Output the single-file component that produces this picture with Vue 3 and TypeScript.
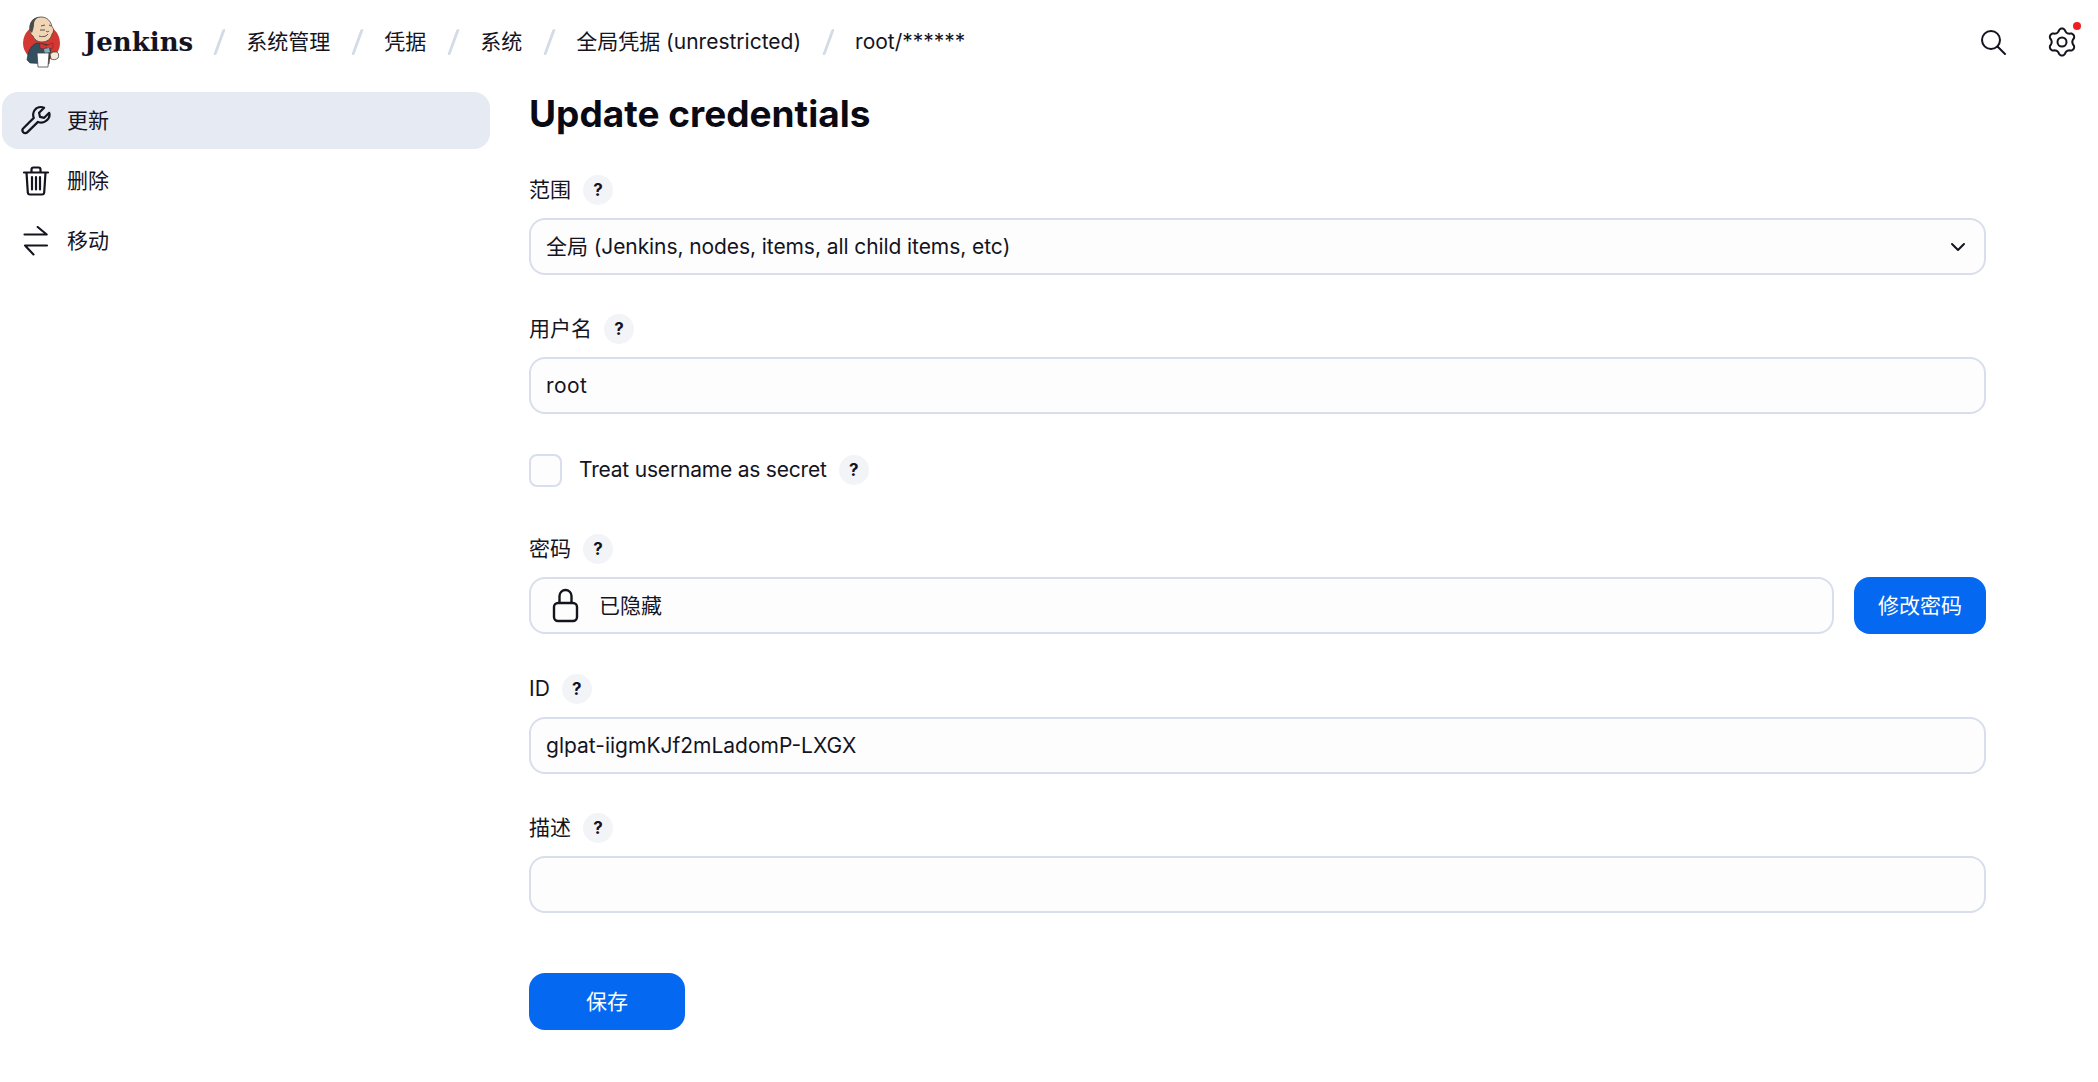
<script setup lang="ts">
const crumbs: string[] = ['系统管理', '凭据', '系统', '全局凭据 (unrestricted)', 'root/******']

function flowerPath(cx: number, cy: number): string {
  const pts: string[] = []
  for (let i = 0; i < 120; i++) {
    const a = (i / 120) * Math.PI * 2
    const c = Math.cos(6 * a)
    const shaped = Math.sign(c) * Math.pow(Math.abs(c), 0.7)
    const r = 11.9 + 1.6 * shaped
    const x = cx + r * Math.sin(a)
    const y = cy - r * Math.cos(a)
    pts.push(`${i === 0 ? 'M' : 'L'}${x.toFixed(2)} ${y.toFixed(2)}`)
  }
  return pts.join('') + 'Z'
}
const gearPath = flowerPath(15, 15)
</script>

<template>
  <div class="page">
    <header class="top">
      <svg class="logo" viewBox="0 0 40 52" width="40" height="52">
        <circle cx="19.500" cy="27" r="18.500" fill="#d33833" />
        <path d="M5 44c1-9 4-15 10-17l12 2c2 3 2 6 1 9l-1 10-19-1z" fill="#335061" stroke="#1d2f3a" stroke-width=".6" />
        <path d="M8 12C8 5 13 1 19 1s10 4 11 10c2 1 2 5 0 7-1 5-5 8-10 8-5 0-8-3-9-6-2-1-4-5-3-8z" fill="#f0d6b7" stroke="#49403a" stroke-width=".8" />
        <path d="M8 15C6 8 10 1 18 1c-4 1-6 4-6 7 0 3-1 6-2 9z" fill="#4a4a46" />
        <path d="M17 20c3 1 7 1 9-2M19 10l4-1M27 9l2 1M18 14l5 0M24 15c1 1 2 1 3 0" fill="none" stroke="#49403a" stroke-width=".9" />
        <path d="M18 27l6 2.500 7-2.500 0 5-5 1-2-1.500-2 1.500-4-1z" fill="#d33833" stroke="#7e1e1a" stroke-width=".5" />
        <path d="M22 33l5-1 1 4-5 2z" fill="#81b0c4" />
        <path d="M15 37h12l-1 14h-10z" fill="#fff" stroke="#49403a" stroke-width=".8" />
        <path d="M28 38l3-2h4c2 1 2 5 1 6-2 2-5 2-7 1z" fill="#f5ead9" stroke="#49403a" stroke-width=".8" />
      </svg>
      <span class="brand">Jenkins</span>
      <nav class="crumbs">
        <template v-for="c in crumbs" :key="c">
          <span class="sep"></span>
          <span class="crumb">{{ c }}</span>
        </template>
      </nav>
      <div class="actions">
        <svg viewBox="0 0 26 26" width="26" height="26" fill="none" stroke="#14141f" stroke-width="2" stroke-linecap="round">
          <circle cx="11" cy="11" r="9" />
          <path d="M17.500 17.500L25 25" />
        </svg>
        <span class="gear">
          <svg viewBox="0 0 30 30" width="30" height="30" fill="none" stroke="#14141f" stroke-width="2" stroke-linejoin="round">
            <path :d="gearPath" />
            <circle cx="15" cy="15" r="4.500" />
          </svg>
          <i class="dot"></i>
        </span>
      </div>
    </header>

    <div class="body">
      <aside class="side">
        <a class="item active">
          <svg viewBox="0 0 30 30" width="30" height="30" fill="none" stroke="#14141f" stroke-width="2.200" stroke-linejoin="round">
            <path d="M28.200 6.800l-5 5-4.200-.9-.9-4.200 5-5c-3.500-1.300-7.700-.4-9.700 2.800-1.500 2.400-1.600 5-.6 7.400L2.600 22c-1.300 1.200-1.500 3-.4 4.200 1.200 1.300 3 1.200 4.300-.1L17 15.900c2.500 1.100 5.300.9 7.700-.8 3-2.100 4.500-5.200 3.500-8.300z" />
          </svg>
          <span>更新</span>
        </a>
        <a class="item">
          <svg viewBox="0 0 30 30" width="30" height="30" fill="none" stroke="#14141f" stroke-width="2.200" stroke-linecap="round" stroke-linejoin="round">
            <path d="M3 6.500h24M10.500 6.500V3.500c0-1 .8-2 2-2h5c1.200 0 2 1 2 2v3M5.500 6.500l1.300 20c.1 1.300 1 2 2.200 2h12c1.200 0 2.100-.7 2.200-2l1.300-20M11 11v12.500M15 11v12.500M19 11v12.500" />
          </svg>
          <span>删除</span>
        </a>
        <a class="item">
          <svg viewBox="0 0 30 30" width="30" height="30" fill="none" stroke="#14141f" stroke-width="2.100" stroke-linecap="round" stroke-linejoin="round">
            <path d="M3.500 8.500h22M16.700 1l9 7.500M4 19.500h22M4 19.500l8.500 9" />
          </svg>
          <span>移动</span>
        </a>
      </aside>

      <main class="main">
        <h1>Update credentials</h1>

        <div class="field">
          <label class="lab">范围<span class="help">?</span></label>
          <div class="input select">
            <span class="tight">全局 (Jenkins, nodes, items, all child items, etc)</span>
            <svg viewBox="0 0 16 16" width="16" height="16" fill="none" stroke="#14141f" stroke-width="2" stroke-linecap="round" stroke-linejoin="round">
              <path d="M2 5l6 6 6-6" />
            </svg>
          </div>
        </div>

        <div class="field">
          <label class="lab">用户名<span class="help">?</span></label>
          <div class="input"><span class="wide">root</span></div>
        </div>

        <div class="field check">
          <span class="box"></span>
          <span class="check-text">Treat username as secret</span>
          <span class="help">?</span>
        </div>

        <div class="field pw-field">
          <label class="lab">密码<span class="help">?</span></label>
          <div class="pw">
            <div class="input lock">
              <svg viewBox="0 0 28 36" width="28" height="36" fill="none" stroke="#14141f" stroke-width="2.400" stroke-linejoin="round">
                <path d="M7.500 15V8a6 6 0 0 1 12 0v7" />
                <rect x="2" y="15" width="23" height="18" rx="4" />
              </svg>
              <span>已隐藏</span>
            </div>
            <button class="btn change">修改密码</button>
          </div>
        </div>

        <div class="field">
          <label class="lab">ID<span class="help">?</span></label>
          <div class="input">glpat-iigmKJf2mLadomP-LXGX</div>
        </div>

        <div class="field">
          <label class="lab">描述<span class="help">?</span></label>
          <div class="input"></div>
        </div>

        <button class="btn save">保存</button>
      </main>
    </div>
  </div>
</template>

<style>
html, body { margin: 0; background: #fff; }
</style>

<style scoped>
.page {
  width: 2098px;
  height: 1082px;
  overflow: hidden;
  font-family: Inter, "Noto Sans CJK SC", sans-serif;
  font-size: 21px;
  line-height: 28px;
  color: #14141f;
  background: #fff;
}
.top {
  display: flex;
  align-items: center;
  height: 84px;
  padding: 0 21px 0 22px;
  box-sizing: border-box;
}
.logo { flex: none; }
.brand {
  margin-left: 22px;
  margin-right: -1px;
  font-family: "DejaVu Serif", serif;
  font-weight: 700;
  font-size: 26px;
  color: #14141f;
}
.crumbs { display: flex; align-items: center; }
.sep {
  width: 3px;
  height: 26px;
  margin: 0 25px 0 26px;
  background: #d3dbe8;
  border-radius: 2px;
  transform: skewX(-20deg);
}
.crumb { white-space: nowrap; }
.actions {
  margin-left: auto;
  display: flex;
  align-items: center;
  gap: 41px;
}
.actions svg { display: block; }
.gear { position: relative; display: block; height: 30px; }
.dot {
  position: absolute;
  top: -5px;
  right: -4px;
  width: 8px;
  height: 8px;
  background: #f01e1e;
  border-radius: 50%;
}
.body { display: flex; }
.side {
  flex: none;
  width: 488px;
  margin: 8px 0 0 2px;
  display: flex;
  flex-direction: column;
  gap: 3px;
}
.item {
  display: flex;
  align-items: center;
  gap: 16px;
  height: 57px;
  padding: 0 19px;
  border-radius: 16px;
}
.item.active { background: #e6eaf2; }
.main {
  flex: none;
  width: 1457px;
  margin-left: 39px;
}
h1 {
  margin: 7px 0 38px;
  font-size: 37px;
  line-height: 46px;
  font-weight: 700;
  color: #0a0a14;
}
.field { margin-bottom: 39px; }
.pw-field { margin-bottom: 40px; }
.lab {
  display: flex;
  align-items: center;
  height: 30px;
  margin-bottom: 13px;
}
.help {
  display: inline-flex;
  align-items: center;
  justify-content: center;
  flex: none;
  width: 30px;
  height: 30px;
  margin-left: 12px;
  border-radius: 50%;
  background: #f2f4f8;
  font-size: 17px;
  font-weight: 700;
}
.input {
  display: flex;
  align-items: center;
  height: 57px;
  box-sizing: border-box;
  padding: 0 15px;
  border: 2px solid #d8deeb;
  border-radius: 16px;
  background: #fdfdfe;
}
.select { justify-content: space-between; padding-right: 18px; }
.tight { letter-spacing: -0.08px; }
.wide { letter-spacing: 0.4px; }
.check {
  display: flex;
  align-items: center;
  height: 34px;
  margin: 0 0 47px;
}
.box {
  width: 33px;
  height: 33px;
  box-sizing: border-box;
  border: 2px solid #d8deeb;
  border-radius: 8px;
  background: #fdfdfe;
}
.check-text { margin-left: 17px; letter-spacing: -0.2px; }
.pw { display: flex; gap: 20px; }
.pw .input { flex: 1; }
.lock { gap: 19px; padding-left: 21px; }
.btn {
  border: 0;
  height: 57px;
  border-radius: 16px;
  background: #0468f0;
  color: #fff;
  font: inherit;
  padding: 0;
}
.change { width: 132px; flex: none; }
.save { width: 156px; margin-top: 60px; display: block; }
</style>
